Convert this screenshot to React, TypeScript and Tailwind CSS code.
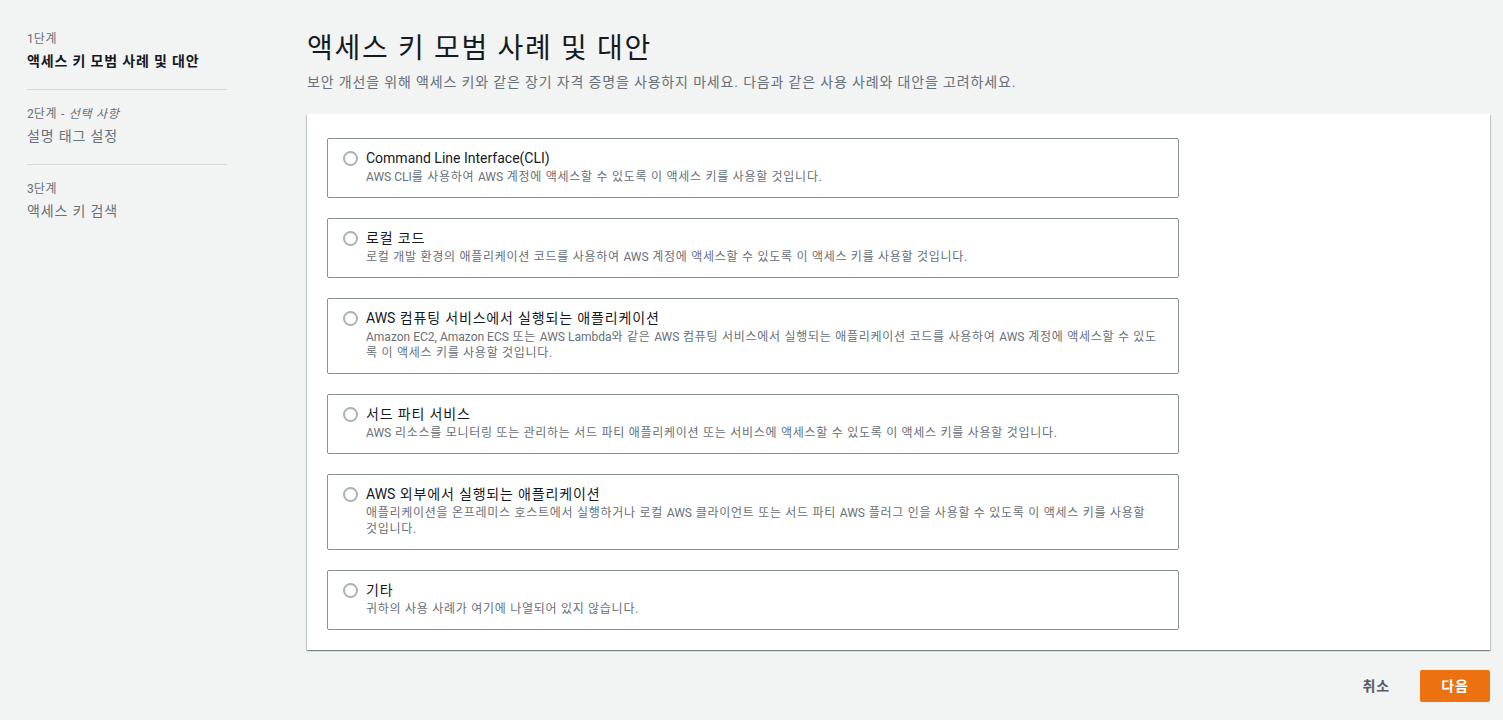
import React from "react"

const font = { fontFamily: '"Roboto", "Noto Sans CJK KR", sans-serif' }

const options = [
  { title: "Command Line Interface(CLI)", desc: ["AWS CLI를 사용하여 AWS 계정에 액세스할 수 있도록 이 액세스 키를 사용할 것입니다."] },
  { title: "로컬 코드", desc: ["로컬 개발 환경의 애플리케이션 코드를 사용하여 AWS 계정에 액세스할 수 있도록 이 액세스 키를 사용할 것입니다."] },
  {
    title: "AWS 컴퓨팅 서비스에서 실행되는 애플리케이션",
    desc: ["Amazon EC2, Amazon ECS 또는 AWS Lambda와 같은 AWS 컴퓨팅 서비스에서 실행되는 애플리케이션 코드를 사용하여 AWS 계정에 액세스할 수 있도", "록 이 액세스 키를 사용할 것입니다."],
  },
  { title: "서드 파티 서비스", desc: ["AWS 리소스를 모니터링 또는 관리하는 서드 파티 애플리케이션 또는 서비스에 액세스할 수 있도록 이 액세스 키를 사용할 것입니다."] },
  {
    title: "AWS 외부에서 실행되는 애플리케이션",
    desc: ["애플리케이션을 온프레미스 호스트에서 실행하거나 로컬 AWS 클라이언트 또는 서드 파티 AWS 플러그 인을 사용할 수 있도록 이 액세스 키를 사용할", "것입니다."],
  },
  { title: "기타", desc: ["귀하의 사용 사례가 여기에 나열되어 있지 않습니다."] },
]

// hangul runs in the reference are wider than Noto's, latin runs are not
function Ko({ text }: { text: string }) {
  const parts = text.split(/([A-Za-z0-9(),]+(?:[ ,]+[A-Za-z0-9(),]+)*)/)
  return (
    <span className="tracking-[0.06em]">
      {parts.map((p, i) =>
        i % 2 === 1 ? (
          <span key={i} className="tracking-normal">{p}</span>
        ) : (
          p
        )
      )}
    </span>
  )
}

function Option({ title, desc }: { title: string; desc: string[] }) {
  return (
    <div className="flex gap-[8px] border border-[#879596] rounded-[2px] pl-[15px] pr-[16px] pt-[9px] pb-[12px]">
      <span className="mt-[3px] w-[15px] h-[15px] shrink-0 rounded-full border-2 border-[#a9b4b5] bg-white" />
      <div className="flex flex-col">
        <span className="mb-[1px] text-[14px] leading-[20px] text-[#16191f]"><Ko text={title} /></span>
        {desc.map((line) => (
          <span key={line} className="text-[12px] leading-[16px] text-[#687078]"><Ko text={line} /></span>
        ))}
      </div>
    </div>
  )
}

export default function App() {
  return (
    <div style={font} className="w-[1503px] h-[720px] overflow-hidden bg-[#f2f3f3] flex">
      {/* Steps */}
      <nav className="w-[307px] shrink-0 pl-[27px] pt-[31px]">
        <div className="w-[200px]">
          <div className="text-[12px] leading-[16px] text-[#687078]"><Ko text="1단계" /></div>
          <div className="mt-[3px] text-[14px] leading-[22px] font-semibold text-[#16191f]"><Ko text="액세스 키 모범 사례 및 대안" /></div>
          <div className="mt-[17px] border-t border-[#d5dbdb]" />
          <div className="mt-[16px] text-[12px] leading-[16px] text-[#687078]"><Ko text="2단계 - " /><i><Ko text="선택 사항" /></i></div>
          <div className="mt-[3px] text-[14px] leading-[22px] text-[#687078]"><Ko text="설명 태그 설정" /></div>
          <div className="mt-[17px] border-t border-[#d5dbdb]" />
          <div className="mt-[16px] text-[12px] leading-[16px] text-[#687078]"><Ko text="3단계" /></div>
          <div className="mt-[3px] text-[14px] leading-[22px] text-[#687078]"><Ko text="액세스 키 검색" /></div>
        </div>
      </nav>

      {/* Main */}
      <main className="w-[1183px] shrink-0 pt-[31px]">
        <h1 className="text-[28px] leading-[36px] font-normal text-[#16191f]"><Ko text="액세스 키 모범 사례 및 대안" /></h1>
        <p className="mt-[4px] text-[14px] leading-[22px] text-[#687078]"><Ko text="보안 개선을 위해 액세스 키와 같은 장기 자격 증명을 사용하지 마세요. 다음과 같은 사용 사례와 대안을 고려하세요." /></p>

        <section className="mt-[21px] bg-white shadow-[0_1px_1px_0_rgba(0,28,36,0.3),1px_1px_1px_0_rgba(0,28,36,0.15),-1px_1px_1px_0_rgba(0,28,36,0.15)] pl-[20px] pt-[24px] pb-[20px]">
          <div className="w-[852px] flex flex-col gap-[20px]">
            {options.map((o) => (
              <Option key={o.title} title={o.title} desc={o.desc} />
            ))}
          </div>
        </section>

        <div className="mt-[20px] flex justify-end items-center gap-[30px]">
          <button className="text-[14px] font-semibold text-[#545b64]"><Ko text="취소" /></button>
          <button className="w-[70px] h-[32px] rounded-[2px] bg-[#ec7211] text-[14px] font-bold text-white"><Ko text="다음" /></button>
        </div>
      </main>
    </div>
  )
}
